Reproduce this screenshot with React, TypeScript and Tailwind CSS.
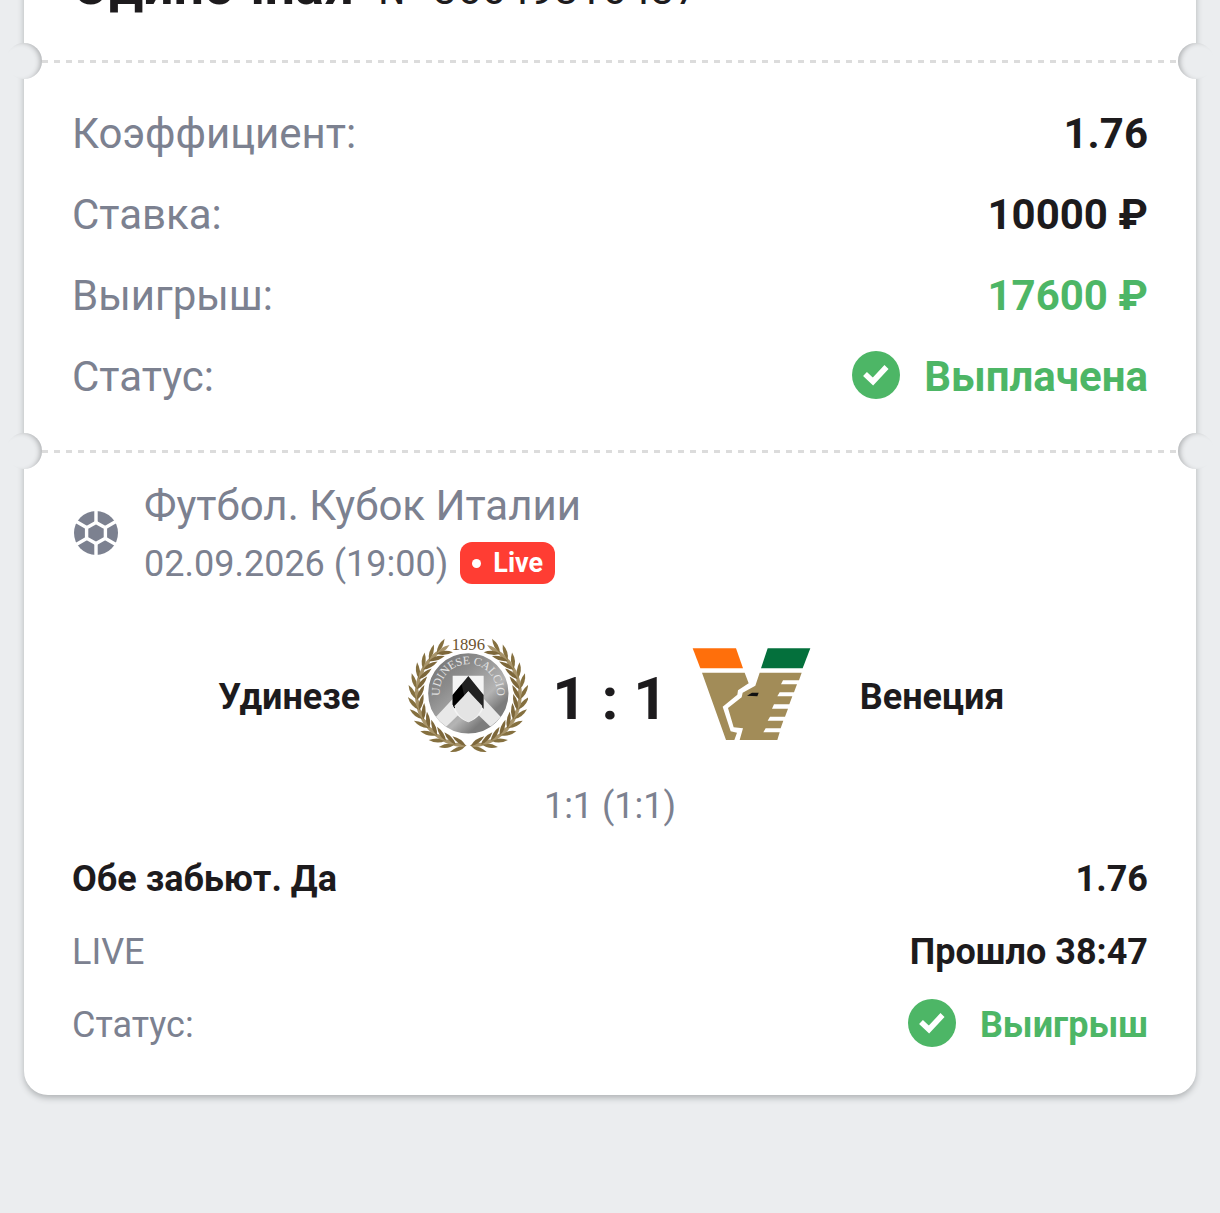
import type { ReactNode } from 'react';

type RowProps = {
    label: string;
    children: ReactNode;
};

const LEAF_STEPS = [0, 1, 2, 3, 4, 5, 6, 7, 8, 9, 10, 11, 12];

const SoccerIcon = () => (
    <svg viewBox="0 0 48 48" className="mb-1 size-12 shrink-0" aria-hidden="true">
        <circle cx="24" cy="24" r="22" fill="#7c8190" />
        <g stroke="#fff" strokeWidth="3.4" fill="none">
            <path d="M24 13.4 33.4 18.7V29.3L24 34.6 14.6 29.3V18.7Z" />
            <path d="M24 14V0M33 18.8 46 11.3M33 29.2 46 36.7M24 34V48M15 29.2 2 36.7M15 18.8 2 11.3" />
        </g>
    </svg>
);

const CheckIcon = () => (
    <svg viewBox="0 0 48 48" className="mb-1 size-12 shrink-0" aria-hidden="true">
        <circle cx="24" cy="24" r="24" fill="#4db666" />
        <path d="M13 23 21 30.5 34.5 16" fill="none" stroke="#fff" strokeWidth="5.6" />
    </svg>
);

// One branch of the wreath, from the bottom centre up to the year
const Branch = () => (
    <g>
        {LEAF_STEPS.map(i => {
            const deg = 101 + i * 11.6;
            const rad = (deg * Math.PI) / 180;
            const leaf = (r: number, turn: number, fill: string) => {
                const x = 208 + r * Math.cos(rad);
                const y = 208 + r * Math.sin(rad);
                return (
                    <path
                        d="M-25 0Q-2 -13 25 0Q-2 11 -25 0Z"
                        fill={fill}
                        transform={`translate(${x} ${y}) rotate(${deg + 90 + turn})`}
                    />
                );
            };
            return (
                <g key={i}>
                    {leaf(167, -32, '#85703f')}
                    {leaf(154, -6, '#a8946a')}
                    {leaf(143, 24, '#7d673a')}
                </g>
            );
        })}
    </g>
);

const UdineseLogo = () => (
    <svg viewBox="27 30 360 360" className="size-[120px] shrink-0 font-normal" role="img" aria-label="Удинезе">
        <defs>
            <linearGradient id="disc" x1="0" y1="0" x2="0.9" y2="1">
                <stop offset="0" stopColor="#6f6f6f" />
                <stop offset="0.35" stopColor="#8c8c8c" />
                <stop offset="0.65" stopColor="#b4b4b4" />
                <stop offset="0.8" stopColor="#7c7c7c" />
            </linearGradient>
            <clipPath id="discClip">
                <circle cx="208" cy="205" r="120" />
            </clipPath>
            <path id="nameArc" d="M124 222A86 86 0 1 1 292 222" />
        </defs>
        <Branch />
        <g transform="translate(416 0) scale(-1 1)">
            <Branch />
        </g>
        <circle cx="208" cy="205" r="123" fill="url(#disc)" stroke="#fff" strokeWidth="5" />
        <g clipPath="url(#discClip)">
            <path d="M163 220 96 292 126 320 184 264ZM253 220 320 292 290 320 232 264Z" fill="#e8e8e8" />
            <path d="M161 152H254V238Q252 274 208 292 164 274 161 238Z" fill="#f4f4f4" />
            <path d="M208 153 254 210V252L208 199 166 250 161 238V210Z" fill="#222" />
            <path d="M161 210 188 178 196 214 166 250 161 238Z" fill="#000" />
            <path d="M208 199 250 243Q240 276 208 292 176 276 166 243Z" fill="#e4e4e4" />
        </g>
        <text fontFamily="Liberation Serif, serif" fontSize="35" fill="#e4e4e4">
            <textPath href="#nameArc" startOffset="50%" textAnchor="middle">UDINESE CALCIO</textPath>
        </text>
        <text x="208" y="76" textAnchor="middle" fontFamily="Liberation Serif, serif" fontSize="50" fill="#6b5330">1896</text>
    </svg>
);

const VeneziaLogo = () => (
    <svg viewBox="35 15 360 360" className="size-[120px] shrink-0" role="img" aria-label="Венеция">
        <path d="M37 55H167L188 115H60Z" fill="#ff6f0b" />
        <path d="M262 55H390L367 115H242Z" fill="#04703c" />
        <path d="M65 128H193L205 160 173 181 171 194 127 230 151 304 170 308 162 330H137Z" fill="#a28c58" />
        <path d="M238 128H364L356 151H308L302 163H350L341 187H298L291 199H336L327 223H281L275 236H323L314 260H269L262 272H309L301 295H256L249 307H298L291 330H178L188 295 160 292 143 234 184 202 187 188 225 167Z" fill="#a28c58" />
        <path d="M200 197 215 188H235L231 199Z" fill="#111" />
    </svg>
);

const Divider = () => (
    <div className="relative -mx-12 flex h-9 items-center" role="separator">
        <span className="absolute -left-[18px] size-9 rounded-full bg-[#ebedef] shadow-[inset_-4px_1px_5px_-2px_#b0b2b4]" />
        <div className="mx-[18px] h-[3px] flex-1 bg-[repeating-linear-gradient(90deg,#dcdcdc_0_6px,transparent_6px_12px)]" />
        <span className="absolute -right-[18px] size-9 rounded-full bg-[#ebedef] shadow-[inset_4px_1px_5px_-2px_#b0b2b4]" />
    </div>
);

const SummaryRow = ({ label, children }: RowProps) => (
    <div className="flex h-[81px] items-center justify-between text-[42px]">
        <dt className="text-[#7c8190]">{label}</dt>
        <dd className="flex items-center gap-6 font-bold">{children}</dd>
    </div>
);

const App = () => {
    return (
        <div className="min-h-screen overflow-hidden bg-[#ebedef] px-6 pb-28 font-[Roboto,sans-serif] text-[#1d1b1d]">
            {/* the ticket is scrolled a little under the top edge */}
            <article className="-mt-12 rounded-b-3xl bg-white px-12 pb-[38px] shadow-[0_3px_6px_#b0b3b5]">
                <header className="h-[91px]">
                    <h1 className="flex items-baseline gap-6 text-[54px] leading-[68px] font-bold whitespace-nowrap">
                        Одиночная
                        <span className="text-[43px] font-normal">№ 36649816437</span>
                    </h1>
                </header>

                <Divider />

                <dl className="pt-[14px] pb-4">
                    <SummaryRow label="Коэффициент:">1.76</SummaryRow>
                    <SummaryRow label="Ставка:">10000 ₽</SummaryRow>
                    <SummaryRow label="Выигрыш:">
                        <span className="text-[#4db666]">17600 ₽</span>
                    </SummaryRow>
                    <SummaryRow label="Статус:">
                        <CheckIcon />
                        <span className="text-[#4db666]">Выплачена</span>
                    </SummaryRow>
                </dl>

                <Divider />

                <section>
                    <div className="flex items-center gap-6 pt-2 text-[#7c8190]">
                        <SoccerIcon />
                        <div>
                            <h2 className="text-[42px] leading-[58px]">Футбол. Кубок Италии</h2>
                            <div className="flex items-center gap-3 text-4xl leading-[58px]">
                                <time dateTime="2026-09-02T19:00">02.09.2026 (19:00)</time>
                                <span className="mb-[2px] flex h-[42px] items-center gap-3 rounded-xl bg-[#ff3d33] px-3 text-[27px] font-bold text-white">
                                    <span className="size-[9px] rounded-full bg-white" />
                                    Live
                                </span>
                            </div>
                        </div>
                    </div>

                    <div className="grid grid-cols-[1fr_auto_1fr] items-center pt-10 text-4xl font-bold">
                        <span className="pt-1 text-right">Удинезе</span>
                        <div className="mx-12 flex items-center gap-6">
                            <UdineseLogo />
                            <span className="pt-2 text-[60px] leading-[116px]">1 : 1</span>
                            <VeneziaLogo />
                        </div>
                        <span className="pt-1">Венеция</span>
                    </div>

                    <p className="pt-6 text-center text-4xl leading-[50px] text-[#7c8190]">1:1 (1:1)</p>

                    <div className="mt-[7px] flex h-[73px] items-center justify-between pt-2 text-4xl font-bold">
                        <span>Обе забьют. Да</span>
                        <span>1.76</span>
                    </div>
                    <div className="flex h-[73px] items-center justify-between pt-2 text-4xl">
                        <span className="text-[#7c8190]">LIVE</span>
                        <span className="font-bold">Прошло 38:47</span>
                    </div>
                    <div className="flex h-[73px] items-center justify-between pt-2 text-4xl">
                        <span className="text-[#7c8190]">Статус:</span>
                        <span className="flex items-center gap-6 font-bold text-[#4db666]">
                            <CheckIcon />
                            Выигрыш
                        </span>
                    </div>
                </section>
            </article>
        </div>
    );
};

export default App;
